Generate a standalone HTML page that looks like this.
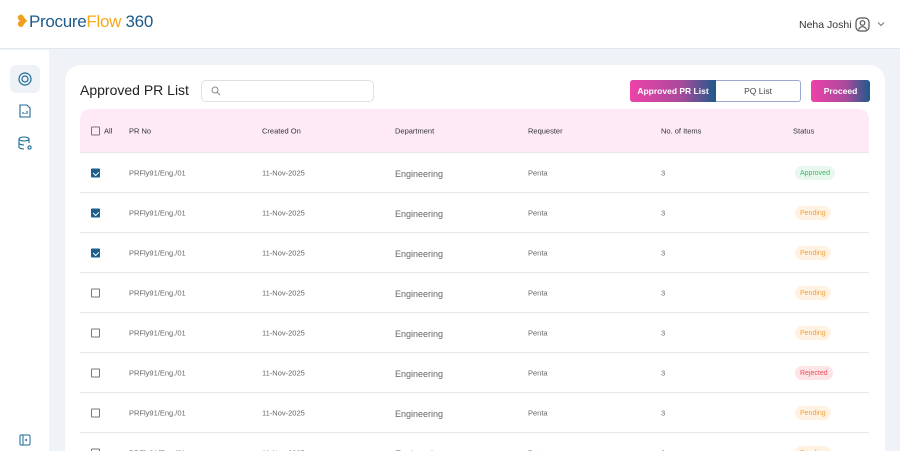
<!DOCTYPE html>
<html><head><meta charset="utf-8"><style>
*{box-sizing:border-box;margin:0;padding:0}
html,body{width:900px;height:451px;overflow:hidden}
body{background:#eff3f8;font-family:"Liberation Sans",sans-serif;color:#222;position:relative}
.hdr{position:absolute;left:0;top:0;width:900px;height:49px;background:#fff;border-bottom:1px solid #e3e7ee}
.logo{position:absolute;left:15px;top:12px;font-size:17px;letter-spacing:-0.3px}
.side{position:absolute;left:0;top:50px;width:49px;height:401px;background:#fff}
.card{position:absolute;left:65px;top:65px;width:820px;height:386px;background:#fff;border-radius:16px 16px 0 0}
.abs{position:absolute}
.row{position:absolute;left:80px;width:789px;height:40px;border-bottom:1px solid #e8e8ec;font-size:7.5px;color:#666}
.row span,.th span{position:absolute;top:50%;transform:translateY(-50%)}
.cb{width:9px;height:9px;border:1px solid #777;border-radius:1px}
.cb.on{background:#1c5f8c;border-color:#1c5f8c}
.cb.on::after{content:"";position:absolute;left:2px;top:1px;width:3px;height:4px;border:solid #fff;border-width:0 1px 1px 0;transform:rotate(45deg)}
.badge{position:absolute;left:795px;height:14px;border-radius:7px;font-size:7px;display:flex;align-items:center;padding:0 5px}
.ap{background:#e8f8ee;color:#3bb86a}.pe{background:#fff2e2;color:#f0a040}.re{background:#fde4e6;color:#e8505b}
</style></head><body>
<div class="hdr">
<div class="logo"><span style="color:#f0a020">❥</span><span style="color:#1d5a8a">Procure</span><span style="color:#f7a81b">Flow</span><span style="color:#1d5a8a"> 360</span></div>
<div class="abs" style="left:799px;top:19px;font-size:10.5px;color:#333">Neha Joshi</div>
<svg class="abs" style="left:855px;top:17px" width="15" height="15" viewBox="0 0 15 15" fill="none" stroke="#555" stroke-width="1.2"><rect x="1" y="1" width="13" height="13" rx="4"/><circle cx="7.5" cy="6" r="2.3"/><path d="M3.5 12.5c1-2 2.3-2.8 4-2.8s3 .8 4 2.8"/></svg>
<svg class="abs" style="left:877px;top:21px" width="8" height="6" viewBox="0 0 8 6" fill="none" stroke="#777"><path d="M1 1.5l3 3 3-3"/></svg>
</div>
<div class="side">
<div class="abs" style="left:10px;top:15px;width:30px;height:28px;background:#eef2f7;border-radius:6px"></div>
<svg class="abs" style="left:18px;top:22px" width="14" height="14" viewBox="0 0 14 14" fill="none" stroke="#1d6a95" stroke-width="1.2"><circle cx="7" cy="7" r="6"/><circle cx="7" cy="7" r="3"/></svg>
<svg class="abs" style="left:19px;top:54px" width="12" height="14" viewBox="0 0 12 14" fill="none" stroke="#1d6a95" stroke-width="1.1"><path d="M1 1h7l3 3v9H1z"/><path d="M4 10v-2M6 10v-1M8 10v-3"/></svg>
<svg class="abs" style="left:18px;top:86px" width="15" height="15" viewBox="0 0 15 15" fill="none" stroke="#1d6a95" stroke-width="1.1"><ellipse cx="6" cy="3" rx="5" ry="2"/><path d="M1 3v8c0 1 2 2 5 2M11 3v4M1 7c0 1 2 2 5 2"/><circle cx="11.5" cy="11.5" r="1.6"/></svg>
<svg class="abs" style="left:19px;top:384px" width="12" height="12" viewBox="0 0 12 12" fill="none" stroke="#1d6a95" stroke-width="1"><rect x="1" y="1" width="10" height="10" rx="1"/><path d="M4 1v10M8 5l-1.5 1L8 7"/></svg>
</div>
<div class="card"></div>
<div class="abs" style="left:80px;top:82px;font-size:14px;color:#222">Approved PR List</div>
<div class="abs" style="left:201px;top:80px;width:173px;height:22px;border:1px solid #dde1e6;border-radius:5px;background:#fff"></div>
<svg class="abs" style="left:211px;top:86px" width="10" height="10" viewBox="0 0 10 10" fill="none" stroke="#888"><circle cx="4" cy="4" r="3"/><path d="M6.3 6.3L9 9"/></svg>
<div class="abs" style="left:630px;top:80px;width:171px;height:22px;border:1px solid #9aa8d0;border-radius:3px"></div>
<div class="abs" style="left:630px;top:80px;width:86px;height:22px;border-radius:3px 0 0 3px;background:linear-gradient(90deg,#ee42a8,#a84a9c 60%,#1d5a8a);color:#fff;font-size:8.5px;font-weight:bold;text-align:center;line-height:22px">Approved PR List</div>
<div class="abs" style="left:716px;top:80px;width:84px;height:22px;font-size:8.5px;text-align:center;line-height:22px;color:#444">PQ List</div>
<div class="abs" style="left:811px;top:80px;width:59px;height:22px;border-radius:3px;background:linear-gradient(90deg,#ee42a8,#a84a9c 60%,#1d5a8a);color:#fff;font-size:8.5px;font-weight:bold;text-align:center;line-height:22px">Proceed</div>
<div class="row th" style="top:109px;height:44px;background:#fdeaf6;border-radius:10px 10px 0 0;color:#333;font-size:7.5px">
<span class="cb" style="left:11px"></span><span style="left:24px">All</span><span style="left:49px">PR No</span><span style="left:182px">Created On</span><span style="left:315px">Department</span><span style="left:448px">Requester</span><span style="left:581px">No. of Items</span><span style="left:713px">Status</span></div>
<div class="row" style="top:153px"><span class="cb on" style="left:11px"></span><span style="left:49px">PRFly91/Eng./01</span><span style="left:182px">11-Nov-2025</span><span style="left:315px;font-size:9px;top:55%">Engineering</span><span style="left:448px">Penta</span><span style="left:581px">3</span></div>
<div class="row" style="top:193px"><span class="cb on" style="left:11px"></span><span style="left:49px">PRFly91/Eng./01</span><span style="left:182px">11-Nov-2025</span><span style="left:315px;font-size:9px;top:55%">Engineering</span><span style="left:448px">Penta</span><span style="left:581px">3</span></div>
<div class="row" style="top:233px"><span class="cb on" style="left:11px"></span><span style="left:49px">PRFly91/Eng./01</span><span style="left:182px">11-Nov-2025</span><span style="left:315px;font-size:9px;top:55%">Engineering</span><span style="left:448px">Penta</span><span style="left:581px">3</span></div>
<div class="row" style="top:273px"><span class="cb" style="left:11px"></span><span style="left:49px">PRFly91/Eng./01</span><span style="left:182px">11-Nov-2025</span><span style="left:315px;font-size:9px;top:55%">Engineering</span><span style="left:448px">Penta</span><span style="left:581px">3</span></div>
<div class="row" style="top:313px"><span class="cb" style="left:11px"></span><span style="left:49px">PRFly91/Eng./01</span><span style="left:182px">11-Nov-2025</span><span style="left:315px;font-size:9px;top:55%">Engineering</span><span style="left:448px">Penta</span><span style="left:581px">3</span></div>
<div class="row" style="top:353px"><span class="cb" style="left:11px"></span><span style="left:49px">PRFly91/Eng./01</span><span style="left:182px">11-Nov-2025</span><span style="left:315px;font-size:9px;top:55%">Engineering</span><span style="left:448px">Penta</span><span style="left:581px">3</span></div>
<div class="row" style="top:393px"><span class="cb" style="left:11px"></span><span style="left:49px">PRFly91/Eng./01</span><span style="left:182px">11-Nov-2025</span><span style="left:315px;font-size:9px;top:55%">Engineering</span><span style="left:448px">Penta</span><span style="left:581px">3</span></div>
<div class="row" style="top:433px"><span class="cb" style="left:11px"></span><span style="left:49px">PRFly91/Eng./01</span><span style="left:182px">11-Nov-2025</span><span style="left:315px;font-size:9px;top:55%">Engineering</span><span style="left:448px">Penta</span><span style="left:581px">3</span></div>
<div class="badge ap" style="top:166px">Approved</div>
<div class="badge pe" style="top:206px">Pending</div>
<div class="badge pe" style="top:246px">Pending</div>
<div class="badge pe" style="top:286px">Pending</div>
<div class="badge pe" style="top:326px">Pending</div>
<div class="badge re" style="top:366px">Rejected</div>
<div class="badge pe" style="top:406px">Pending</div>
<div class="badge pe" style="top:446px">Pending</div>
</body></html>
